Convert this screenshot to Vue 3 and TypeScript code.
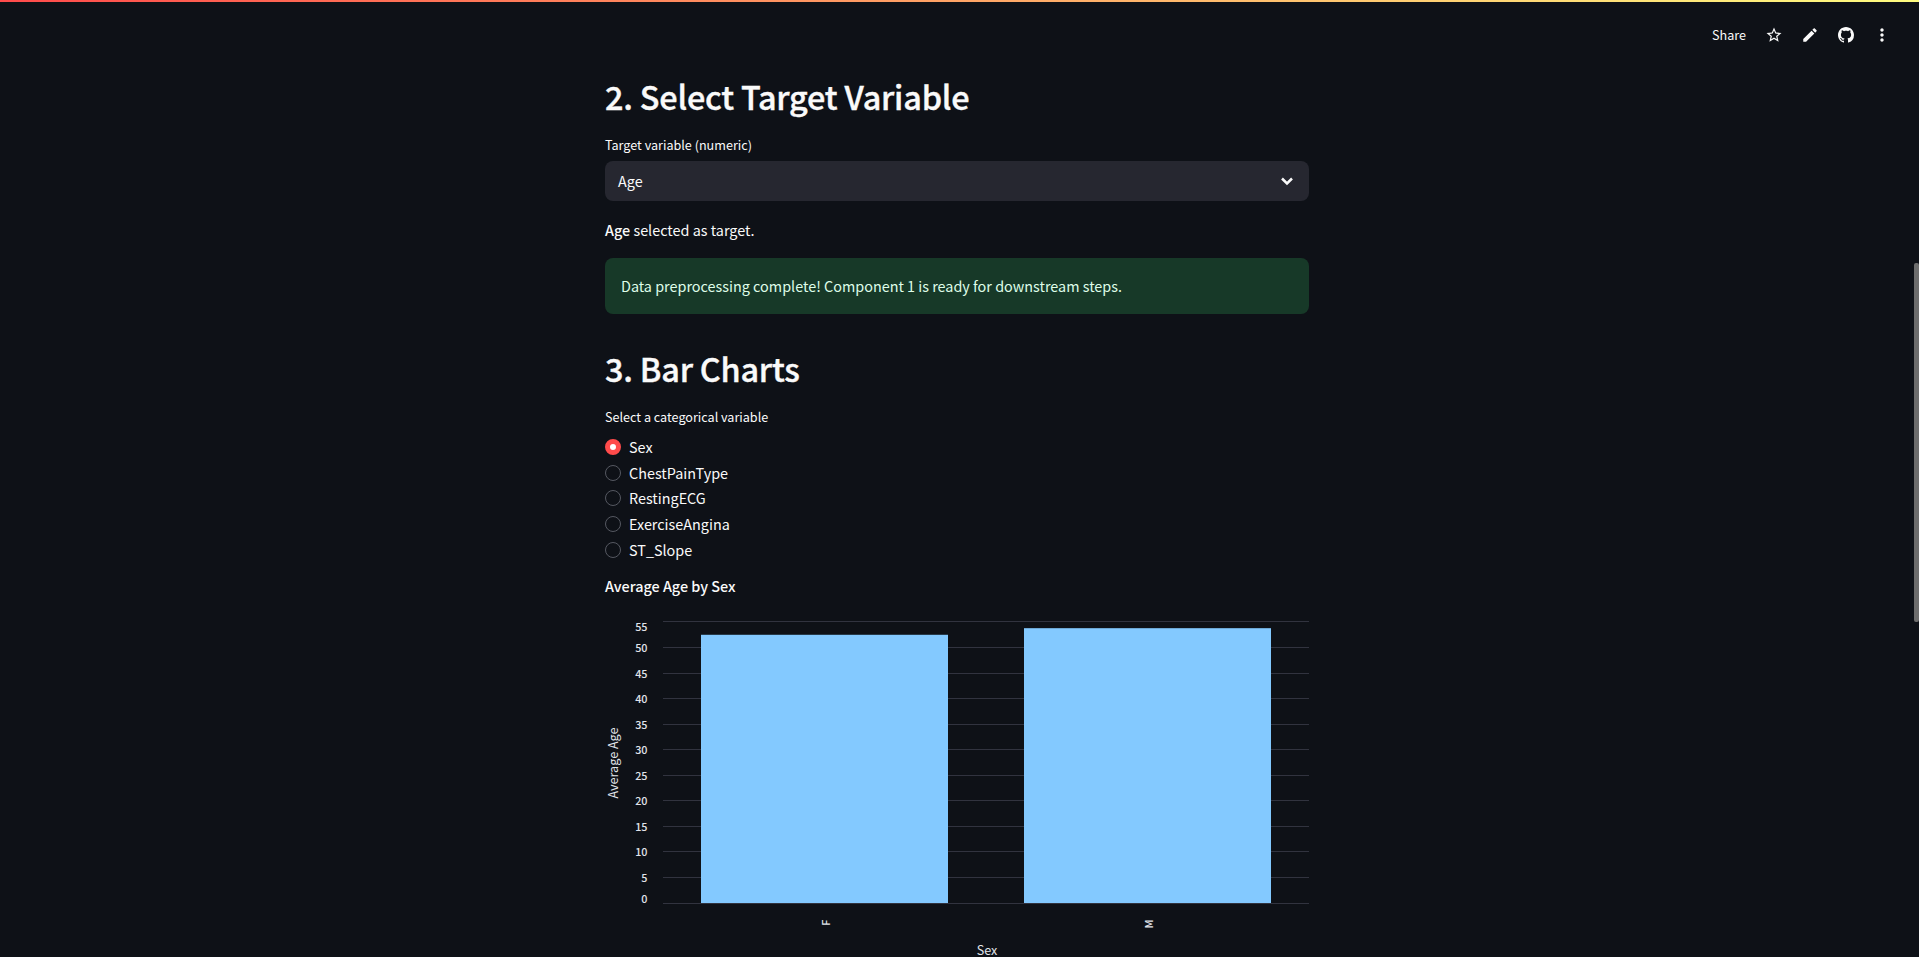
<script setup lang="ts">
const options = ['Sex', 'ChestPainType', 'RestingECG', 'ExerciseAngina', 'ST_Slope']

const baseY = 303
const unit = 5.11
const ticks = [0, 5, 10, 15, 20, 25, 30, 35, 40, 45, 50, 55]

function tickY(v: number) {
  return baseY - v * unit
}
// vega pushes the first and last labels inside the axis
function labelY(v: number) {
  if (v === 0) return tickY(v) - 5
  if (v === 55) return tickY(v) + 4.5
  return tickY(v) - 0.5
}

const bars = [
  { name: 'F', x: 96, value: 52.49 },
  { name: 'M', x: 419, value: 53.78 },
]
</script>

<template>
  <div class="app">
    <div class="top-line"></div>
    <header class="toolbar">
      <span class="share">Share</span>
      <svg class="icon" viewBox="0 0 24 24" width="18" height="18"><path d="M22 9.24l-7.19-.62L12 2 9.19 8.63 2 9.24l5.46 4.73L5.82 21 12 17.27 18.18 21l-1.63-7.03L22 9.24zM12 15.4l-3.76 2.27 1-4.28-3.32-2.88 4.38-.38L12 6.1l1.71 4.04 4.38.38-3.32 2.88 1 4.28L12 15.4z" /></svg>
      <svg class="icon" viewBox="0 0 24 24" width="18" height="18"><path d="M3 17.25V21h3.75L17.81 9.94l-3.75-3.75L3 17.25zM20.71 7.04c.39-.39.39-1.02 0-1.41l-2.34-2.34c-.39-.39-1.02-.39-1.41 0l-1.83 1.83 3.75 3.75 1.83-1.83z" /></svg>
      <svg class="icon" viewBox="0 0 16 16" width="16" height="16"><path d="M8 0C3.58 0 0 3.58 0 8c0 3.54 2.29 6.53 5.47 7.59.4.07.55-.17.55-.38 0-.19-.01-.82-.01-1.49-2.01.37-2.53-.49-2.69-.94-.09-.23-.48-.94-.82-1.13-.28-.15-.68-.52-.01-.53.63-.01 1.08.58 1.23.82.72 1.21 1.87.87 2.33.66.07-.52.28-.87.51-1.07-1.78-.2-3.64-.89-3.64-3.95 0-.87.31-1.59.82-2.15-.08-.2-.36-1.02.08-2.12 0 0 .67-.21 2.2.82.64-.18 1.32-.27 2-.27.68 0 1.36.09 2 .27 1.53-1.04 2.2-.82 2.2-.82.44 1.1.16 1.92.08 2.12.51.56.82 1.27.82 2.15 0 3.07-1.87 3.75-3.65 3.95.29.25.54.73.54 1.48 0 1.07-.01 1.93-.01 2.2 0 .21.15.46.55.38A8.013 8.013 0 0016 8c0-4.42-3.58-8-8-8z" /></svg>
      <svg class="icon" viewBox="0 0 24 24" width="20" height="20"><path d="M12 8c1.1 0 2-.9 2-2s-.9-2-2-2-2 .9-2 2 .9 2 2 2zm0 2c-1.1 0-2 .9-2 2s.9 2 2 2 2-.9 2-2-.9-2-2-2zm0 6c-1.1 0-2 .9-2 2s.9 2 2 2 2-.9 2-2-.9-2-2-2z" /></svg>
    </header>

    <main class="content">
      <h2 class="heading">2. Select Target Variable</h2>
      <label class="field-label">Target variable (numeric)</label>
      <div class="select">
        <span>Age</span>
        <svg viewBox="0 0 24 24" width="20" height="20" fill="none" stroke="#fafafa" stroke-width="3"><path d="M6 9l6 6 6-6" /></svg>
      </div>
      <p class="note"><strong>Age</strong> selected as target.</p>
      <div class="success">Data preprocessing complete! Component 1 is ready for downstream steps.</div>

      <h2 class="heading second">3. Bar Charts</h2>
      <label class="field-label cat">Select a categorical variable</label>
      <div class="radios">
        <div v-for="(opt, i) in options" :key="opt" class="radio-row">
          <span class="radio" :class="{ checked: i === 0 }"></span>
          <span class="radio-text">{{ opt }}</span>
        </div>
      </div>
      <div class="chart-title">Average Age by Sex</div>

      <svg class="chart" width="704" height="357" viewBox="0 0 704 357">
        <g v-for="t in ticks" :key="t">
          <line x1="58" x2="704" :y1="tickY(t)" :y2="tickY(t)" class="grid" />
          <text x="42.5" :y="labelY(t)" class="tick" text-anchor="end" dominant-baseline="central">{{ t }}</text>
        </g>
        <rect
          v-for="b in bars"
          :key="b.name"
          :x="b.x"
          :y="baseY - b.value * unit"
          width="247"
          :height="b.value * unit"
          fill="#83c9ff"
        />
        <text
          v-for="b in bars"
          :key="b.name + '-label'"
          class="tick"
          text-anchor="end"
          dominant-baseline="central"
          :transform="`translate(${b.x + 123.5} 319.5) rotate(-90)`"
        >{{ b.name }}</text>
        <text class="axis-title" text-anchor="middle" dominant-baseline="central" transform="translate(7 163) rotate(-90)">Average Age</text>
        <text class="axis-title" x="382" y="349.5" text-anchor="middle" dominant-baseline="central">Sex</text>
      </svg>
    </main>

    <div class="scroll-thumb"></div>
  </div>
</template>

<style scoped>
.app {
  position: relative;
  height: 957px;
  overflow: hidden;
  padding-right: 5px;
  background: #0e1117;
  color: #fafafa;
  font-family: "Noto Sans CJK SC", "Noto Sans", sans-serif;
  font-size: 14.4px;
}
.top-line {
  position: absolute;
  top: 0;
  left: 0;
  right: 0;
  height: 2px;
  background: linear-gradient(90deg, #ff4b4b, #fffd80);
}
.toolbar {
  position: absolute;
  top: 0;
  right: 0;
  height: 70px;
  width: 230px;
  display: flex;
  align-items: center;
}
.share {
  position: absolute;
  left: 23px;
  font-size: 12.6px;
  margin-top: -1px;
}
.icon {
  position: absolute;
  fill: #fafafa;
}
.icon:nth-of-type(1) { left: 76px; }
.icon:nth-of-type(2) { left: 112px; }
.icon:nth-of-type(3) { left: 149px; }
.icon:nth-of-type(4) { left: 183px; }
.content {
  width: 704px;
  margin: 0 auto;
  padding-top: 74px;
}
.heading {
  margin: 0;
  font-size: 32.4px;
  line-height: 44px;
  font-weight: 500;
  letter-spacing: -0.2px;
  -webkit-text-stroke: 0.4px #fafafa;
}
.second {
  margin-top: 32px;
}
.field-label {
  display: block;
  margin-top: 17px;
  font-size: 12.6px;
  line-height: 20px;
}
.select {
  display: flex;
  align-items: center;
  justify-content: space-between;
  height: 40px;
  margin-top: 6px;
  padding: 0 12px 0 13px;
  box-sizing: border-box;
  background: #262730;
  border-radius: 8px;
}
.select span {
  margin-bottom: 2px;
}
.note {
  margin: 17px 0 0;
  line-height: 23px;
  padding-bottom: 1px;
}
.note strong {
  font-weight: 500;
}
.success {
  height: 56px;
  margin-top: 16px;
  padding: 0 16px 2px;
  box-sizing: border-box;
  display: flex;
  align-items: center;
  background: #173928;
  color: #dffde9;
  border-radius: 8px;
}
.radios {
  margin-top: 7px;
}
.radio-row {
  display: flex;
  align-items: center;
  gap: 8px;
  height: 25.75px;
}
.radio {
  width: 16px;
  height: 16px;
  box-sizing: border-box;
  border-radius: 50%;
  border: 1px solid #555861;
}
.radio.checked {
  border: 5px solid #ff4b4b;
  background: #fff;
}
.radio-text {
  margin-bottom: 1px;
}
.chart-title {
  margin-top: 11.25px;
  font-weight: 500;
  line-height: 24px;
}
.chart {
  display: block;
  margin-top: 2px;
  overflow: visible;
}
.grid {
  stroke: #31333f;
  stroke-width: 1;
  shape-rendering: crispEdges;
}
.tick {
  fill: #e1e4ea;
  font-size: 10.8px;
  font-weight: 500;
}
.axis-title {
  fill: #e1e4ea;
  font-size: 12.6px;
}
.scroll-thumb {
  position: absolute;
  left: 1914px;
  right: 0;
  top: 263px;
  height: 359px;
  border-radius: 2px;
  background: #6d6d6d;
}
</style>
